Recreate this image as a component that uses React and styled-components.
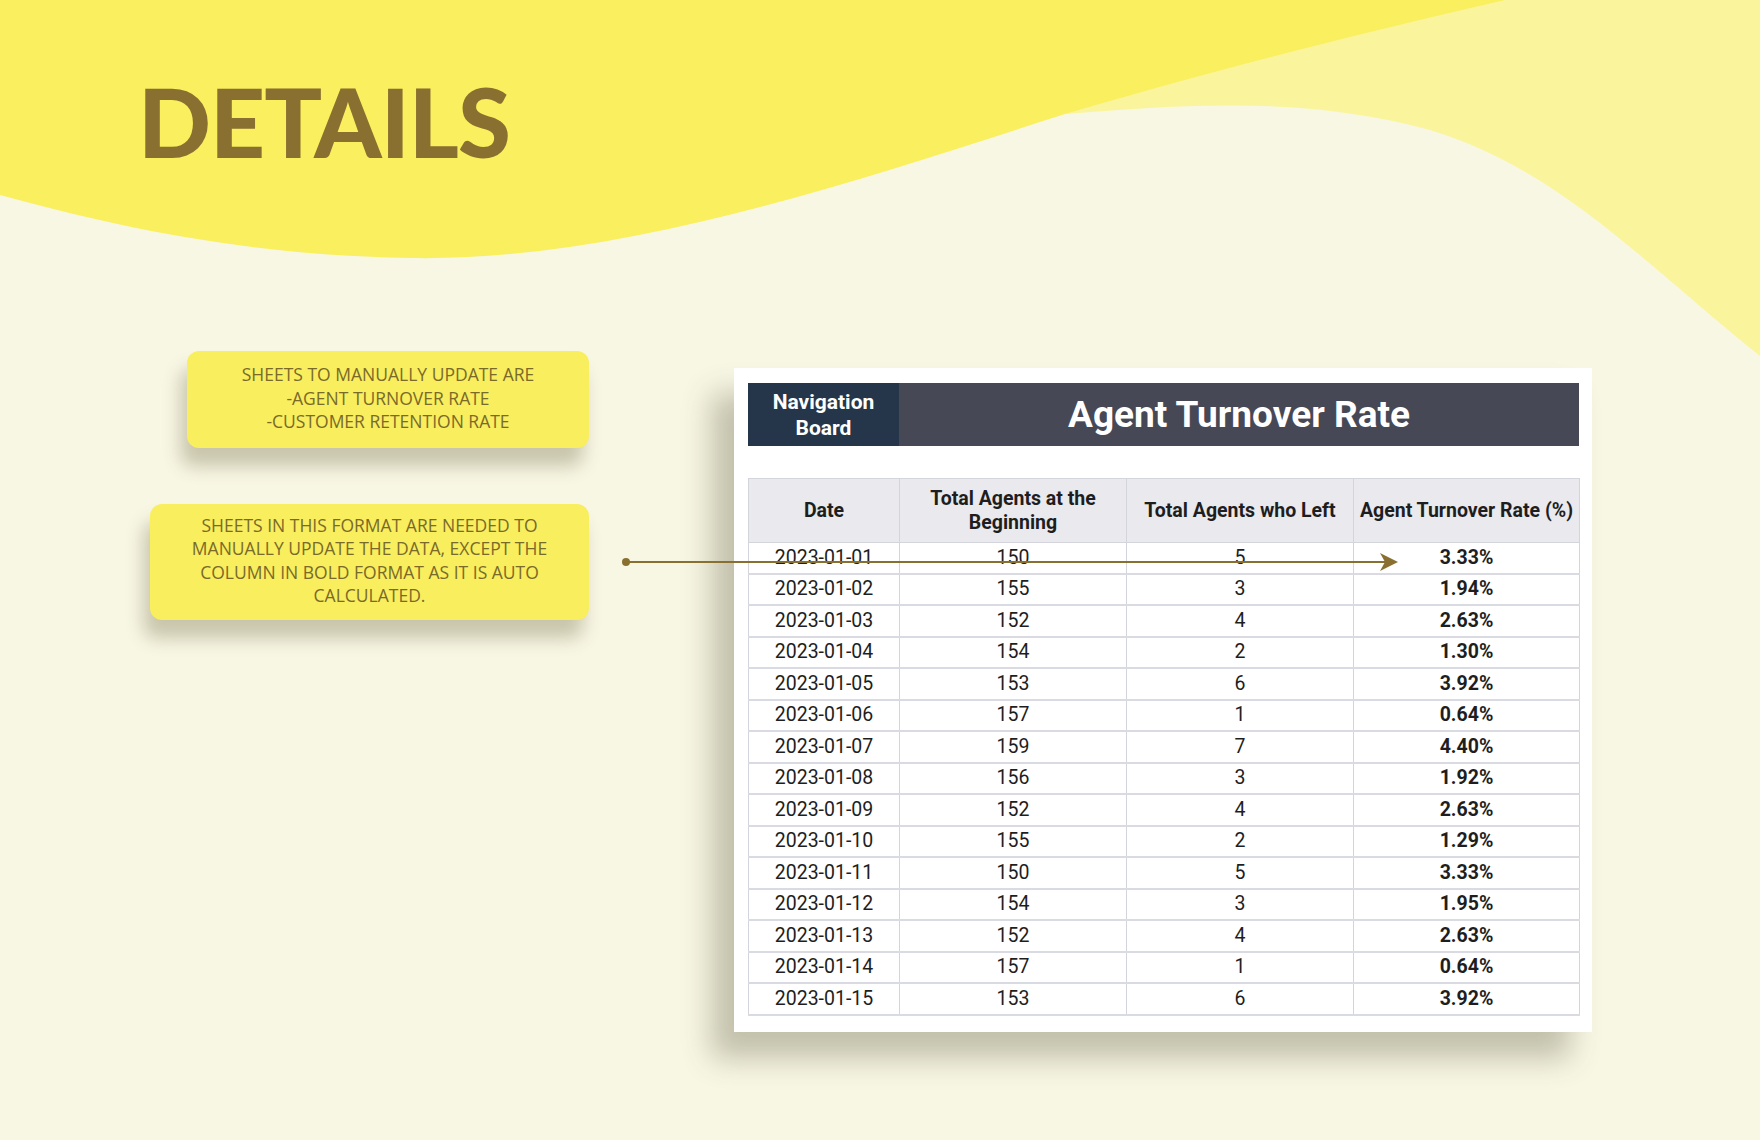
import React from "react";
import styled, { createGlobalStyle } from "styled-components";

const Global = createGlobalStyle`
  html, body { margin: 0; padding: 0; }
  body { background: #f8f7e4; font-family: Roboto, "Liberation Sans", sans-serif; }
`;

const Page = styled.div`
  position: relative;
  width: 1760px;
  height: 1140px;
  overflow: hidden;
  background: #f8f7e4;
`;

const Waves = styled.svg`
  position: absolute;
  inset: 0;
  z-index: 0;
`;

const Content = styled.div`
  position: relative;
  z-index: 1;
  padding: 66px 0 0 138px;
`;

const Title = styled.h1`
  margin: 0;
  font-family: Lato, "Liberation Sans", sans-serif;
  font-weight: 900;
  font-size: 96px;
  line-height: 110px;
  color: #8a7030;
  letter-spacing: -1px;
`;

const Row = styled.div`
  display: flex;
  align-items: flex-start;
  margin-top: 175px;
  margin-left: 12px;
`;

const Notes = styled.div`
  width: 439px;
  display: flex;
  flex-direction: column;
  align-items: flex-end;
  gap: 56px;
`;

const Note = styled.div`
  width: ${(p) => p.w}px;
  box-sizing: border-box;
  background: #f9ee5e;
  border-radius: 12px;
  padding: ${(p) => p.pad};
  text-align: center;
  font-family: "Open Sans", Lato, sans-serif;
  font-size: 17.5px;
  line-height: 23.5px;
  color: #7a6a2a;
  text-transform: uppercase;
  box-shadow: -6px 18px 18px rgba(80, 70, 30, 0.28);
`;

const Card = styled.div`
  margin-left: 145px;
  margin-top: 17px;
  width: 858px;
  box-sizing: border-box;
  background: #fff;
  padding: 15px 13px 16px 14px;
  box-shadow: -22px 26px 28px rgba(70, 65, 40, 0.3);
`;

const Header = styled.div`
  display: flex;
  height: 63px;
  background: #464856;
  color: #fff;
`;

const Nav = styled.div`
  width: 151px;
  background: #25364a;
  display: flex;
  align-items: center;
  justify-content: center;
  text-align: center;
  font-weight: 700;
  font-size: 21px;
  line-height: 26px;
`;

const HeadTitle = styled.div`
  flex: 1;
  display: flex;
  align-items: center;
  justify-content: center;
  font-weight: 700;
  font-size: 37px;
`;

const Table = styled.table`
  margin-top: 32px;
  width: 831px;
  border-collapse: collapse;
  table-layout: fixed;
  color: #1e1e1e;
  font-size: 19.5px;
`;

const Th = styled.th`
  background: #e9e9ee;
  border: 1.5px solid #d4d4dc;
  height: 63px;
  padding: 0 4px;
  font-weight: 700;
  font-size: 19.5px;
  line-height: 24px;
`;

const Td = styled.td`
  border-left: 1.5px solid #d4d4dc;
  border-right: 1.5px solid #d4d4dc;
  border-bottom: 2px solid #dadae2;
  height: 29.5px;
  padding: 0;
  text-align: center;
  line-height: 26px;
  font-weight: ${(p) => (p.bold ? 700 : 400)};
`;

const Arrow = styled.svg`
  position: absolute;
  left: 0;
  top: 0;
  z-index: 2;
  pointer-events: none;
`;

const rows = [
  ["2023-01-01", 150, 5, "3.33%"],
  ["2023-01-02", 155, 3, "1.94%"],
  ["2023-01-03", 152, 4, "2.63%"],
  ["2023-01-04", 154, 2, "1.30%"],
  ["2023-01-05", 153, 6, "3.92%"],
  ["2023-01-06", 157, 1, "0.64%"],
  ["2023-01-07", 159, 7, "4.40%"],
  ["2023-01-08", 156, 3, "1.92%"],
  ["2023-01-09", 152, 4, "2.63%"],
  ["2023-01-10", 155, 2, "1.29%"],
  ["2023-01-11", 150, 5, "3.33%"],
  ["2023-01-12", 154, 3, "1.95%"],
  ["2023-01-13", 152, 4, "2.63%"],
  ["2023-01-14", 157, 1, "0.64%"],
  ["2023-01-15", 153, 6, "3.92%"],
];

export default function App() {
  return (
    <Page>
      <Global />
      <Waves width="1760" height="1140" viewBox="0 0 1760 1140">
        <path d="M1500 0 H1760 V356 C1640 260 1560 170 1430 130 C1300 95 1180 105 1065 114 C1200 60 1380 30 1500 0 Z" fill="#faf59c" />
        <path d="M0 0 H1505 C1330 40 1180 80 1065 114 C860 180 620 262 410 258 C240 255 110 225 0 195 Z" fill="#f9ef5f" />
      </Waves>
      <Content>
        <Title>DETAILS</Title>
        <Row>
          <Notes>
            <Note w={402} pad="12px 10px 14px">
              Sheets to manually update are
              <br />-Agent Turnover Rate
              <br />-Customer Retention Rate
            </Note>
            <Note w={439} pad="10px 18px 12px">
              Sheets in this format are needed to manually update the data, except the column in bold format as it is auto calculated.
            </Note>
          </Notes>
          <Card>
            <Header>
              <Nav>
                Navigation
                <br />
                Board
              </Nav>
              <HeadTitle>Agent Turnover Rate</HeadTitle>
            </Header>
            <Table>
              <colgroup>
                <col style={{ width: 151 }} />
                <col style={{ width: 227 }} />
                <col style={{ width: 227 }} />
                <col style={{ width: 226 }} />
              </colgroup>
              <thead>
                <tr>
                  <Th>Date</Th>
                  <Th>Total Agents at the Beginning</Th>
                  <Th>Total Agents who Left</Th>
                  <Th>Agent Turnover Rate (%)</Th>
                </tr>
              </thead>
              <tbody>
                {rows.map((r) => (
                  <tr key={r[0]}>
                    <Td>{r[0]}</Td>
                    <Td>{r[1]}</Td>
                    <Td>{r[2]}</Td>
                    <Td bold>{r[3]}</Td>
                  </tr>
                ))}
              </tbody>
            </Table>
          </Card>
        </Row>
      </Content>
      <Arrow width="1760" height="1140" viewBox="0 0 1760 1140">
        <circle cx="626" cy="562" r="4" fill="#8a7030" />
        <line x1="626" y1="562" x2="1390" y2="562" stroke="#8a7030" strokeWidth="2" />
        <path d="M1380 553 L1398 562 L1380 571 L1385 562 Z" fill="#8a7030" />
      </Arrow>
    </Page>
  );
}
